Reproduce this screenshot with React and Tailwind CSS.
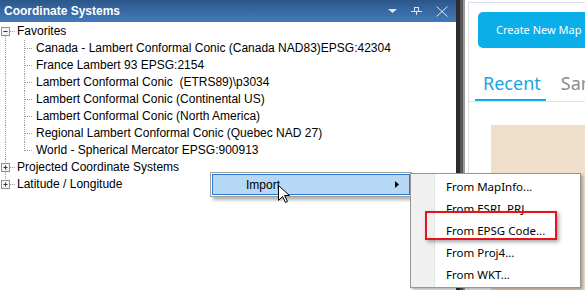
import React from 'react';

const favorites = [
  'Canada - Lambert Conformal Conic (Canada NAD83)EPSG:42304',
  'France Lambert 93 EPSG:2154',
  'Lambert Conformal Conic  (ETRS89)\\p3034',
  'Lambert Conformal Conic (Continental US)',
  'Lambert Conformal Conic (North America)',
  'Regional Lambert Conformal Conic (Quebec NAD 27)',
  'World - Spherical Mercator EPSG:900913',
];

const importItems = ['From MapInfo...', 'From ESRI .PRJ...', 'From EPSG Code...', 'From Proj4...', 'From WKT...'];

// tree glyph: expander box + dotted connectors
function Expander({ open, first, last }) {
  return (
    <svg width="17" height="17" className="shrink-0">
      {!first && <line x1="5.5" y1="0" x2="5.5" y2="4" stroke="#a0a0a0" strokeDasharray="1 1" />}
      {!last && <line x1="5.5" y1="13" x2="5.5" y2="17" stroke="#a0a0a0" strokeDasharray="1 1" />}
      <line x1="10" y1="8.5" x2="15" y2="8.5" stroke="#a0a0a0" strokeDasharray="1 1" />
      <rect x="1.5" y="4.5" width="8" height="8" fill="#f4f4f4" stroke="#8f8f8f" />
      <line x1="3.5" y1="8.5" x2="7.5" y2="8.5" stroke="#333" />
      {!open && <line x1="5.5" y1="6.5" x2="5.5" y2="10.5" stroke="#333" />}
    </svg>
  );
}

function Branch({ last }) {
  return (
    <svg width="36" height="17" className="shrink-0">
      <line x1="5.5" y1="0" x2="5.5" y2="17" stroke="#a0a0a0" strokeDasharray="1 1" />
      <line x1="24.5" y1="0" x2="24.5" y2={last ? 9 : 17} stroke="#a0a0a0" strokeDasharray="1 1" />
      <line x1="25" y1="8.5" x2="33" y2="8.5" stroke="#a0a0a0" strokeDasharray="1 1" />
    </svg>
  );
}

function TitleIcons() {
  return (
    <div className="flex items-center gap-[14px] pr-[8px]">
      <svg width="9" height="4"><path d="M0 0 H9 L4.5 4 Z" fill="#dde6f0" /></svg>
      <svg width="11" height="8">
        <path d="M3 0.5 H8 M3.5 0.5 V4.5 M7.5 0.5 V4.5 M0 4.5 H11 M5.5 4.5 V8" stroke="#dde6f0" fill="none" />
      </svg>
      <svg width="12" height="11">
        <path d="M0.5 0.5 L11.5 10.5 M11.5 0.5 L0.5 10.5" stroke="#dde6f0" />
      </svg>
    </div>
  );
}

export default function App() {
  return (
    <div className="relative w-[585px] h-[290px] overflow-hidden bg-white flex font-['Liberation_Sans',Arial,sans-serif] text-[12px] text-black">
      {/* Coordinate systems panel */}
      <div className="w-[456px] shrink-0 flex flex-col">
        <div className="h-[22px] flex items-center justify-between bg-gradient-to-b from-[#2c5689] to-[#427bbb]">
          <span className="pl-[4px] font-bold text-white">Coordinate Systems</span>
          <TitleIcons />
        </div>
        <div className="pt-[1px] leading-[17px]">
          <div className="flex items-center h-[17px]">
            <Expander open first />
            <span>Favorites</span>
          </div>
          {favorites.map((f, i) => (
            <div key={i} className="flex items-center h-[17px]">
              <Branch last={i === favorites.length - 1} />
              <span className="whitespace-pre">{f}</span>
            </div>
          ))}
          <div className="flex items-center h-[17px]">
            <Expander />
            <span>Projected Coordinate Systems</span>
          </div>
          <div className="flex items-center h-[17px]">
            <Expander last />
            <span>Latitude / Longitude</span>
          </div>
        </div>
      </div>

      {/* splitter */}
      <div className="flex shrink-0">
        <div className="w-[4px] bg-[#2b2b2b]" />
        <div className="w-[3px] bg-[#565656]" />
        <div className="w-[2px] bg-[#9a9a9a]" />
        <div className="w-[3px] bg-white" />
      </div>

      {/* start page */}
      <div className="flex-1 min-w-0 border-l border-t border-[#dcdce4] mt-[2px] flex flex-col font-['Noto_Sans',sans-serif]">
        <div className="pl-[9px] pt-[9px]">
          <div className="h-[36px] w-[140px] rounded-[5px] bg-[#0aaee9] text-white text-[11px] flex items-center pl-[18px] whitespace-nowrap">
            Create New Map
          </div>
        </div>
        <div className="mt-[23px] flex items-end gap-[15px] pl-[6px] border-b border-[#e0e0e8] h-[31px] whitespace-nowrap">
          <div className="border-b-[2px] border-[#0aaee9] pb-[5px] pl-[8px] pr-[5px] text-[18px] leading-[22px] text-[#1aa3e6]">Recent</div>
          <div className="pb-[7px] text-[18px] leading-[22px] text-[#8c8c8c]">Samples</div>
        </div>
        <div className="ml-[22px] mt-[23px] flex-1 bg-[#f0dfcb]" />
      </div>

      {/* context menu */}
      <div className="absolute left-[210px] top-[172px] w-[202px] h-[25px] border border-[#a0a0a0] bg-white p-[1px] shadow-[3px_3px_3px_rgba(0,0,0,0.3)]">
        <div className="h-full border border-[#2a7bd5] bg-[#b7d8f4] flex items-center justify-between pl-[33px] pr-[10px]">
          <span>Import</span>
          <svg width="4" height="7"><path d="M0 0 L4 3.5 L0 7 Z" fill="#000" /></svg>
        </div>
      </div>

      {/* submenu */}
      <div className="absolute left-[410px] top-[173px] w-[171px] h-[115px] border border-[#979797] bg-white flex shadow-[2px_2px_3px_rgba(0,0,0,0.3)] font-['Noto_Sans',sans-serif] text-[11.5px]">
        <div className="w-[24px] bg-[#f0f0f0] border-r border-[#e3e3e3]" />
        <div className="flex-1 pt-[2px] pl-[11px]">
          {importItems.map((t) => (
            <div key={t} className="h-[22px] flex items-center">{t}</div>
          ))}
        </div>
      </div>

      {/* highlight box */}
      <div className="absolute left-[425px] top-[211px] w-[132px] h-[29px] border-[2.5px] border-[#e8121b] shadow-[2px_2px_4px_rgba(0,0,0,0.35)]" />

      {/* mouse cursor */}
      <svg className="absolute left-[278px] top-[185px]" width="13" height="20">
        <path d="M0.5 0.5 L0.5 15.5 L4.5 11.5 L7.5 17.5 L9.5 16.5 L6.5 10.5 L11.5 10.5 Z" fill="#fff" stroke="#000" strokeLinejoin="round" />
      </svg>
    </div>
  );
}
